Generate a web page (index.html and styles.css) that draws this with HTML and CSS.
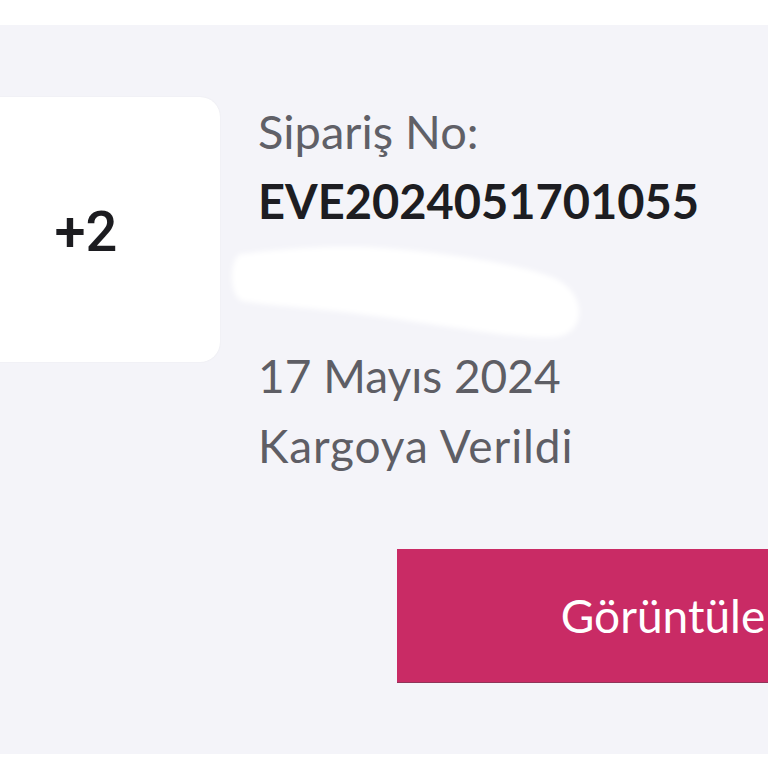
FILE: index.html
```html
<!DOCTYPE html>
<html lang="tr">
<head>
<meta charset="utf-8">
<title>Sipariş</title>
<link rel="stylesheet" href="styles.css">
</head>
<body>
<header class="topbar"></header>
<main class="order">
  <div class="order-row">
    <div class="thumb"><span class="more">+2</span></div>
    <div class="info">
      <div class="label">Sipariş No:</div>
      <div class="number">EVE2024051701055</div>
      <div class="redacted">
        <svg width="370" height="110" viewBox="-6 -4 370 110" aria-hidden="true">
          <defs>
            <filter id="soft" x="-10%" y="-20%" width="120%" height="140%">
              <feGaussianBlur stdDeviation="2.5"/>
            </filter>
          </defs>
          <path filter="url(#soft)" fill="#ffffff" d="M 8 14 C 60 8, 108 5, 150 8 C 220 13, 290 25, 322 38 C 354 52, 356 92, 325 97 C 290 101, 200 83, 120 73 C 70 67, 30 65, 10 61 C -3 56, -3 20, 8 14 Z"/>
        </svg>
      </div>
      <div class="meta">17 Mayıs 2024</div>
      <div class="meta status">Kargoya Verildi</div>
    </div>
  </div>
  <div class="actions">
    <button class="view-btn" type="button">Görüntüle</button>
  </div>
</main>
<footer class="bottombar"></footer>
</body>
</html>
```

FILE: styles.css
```css
* { box-sizing: border-box; }

html, body {
  margin: 0;
  padding: 0;
  background: #ffffff;
  width: 768px;
  height: 768px;
  overflow: hidden;
  font-family: "Lato", "Noto Sans", sans-serif;
}

.topbar {
  height: 25px;
  background: #ffffff;
}

.order {
  height: 729px;
  background: #f4f4f9;
  overflow: hidden;
  padding-top: 72px;
}

.order-row {
  display: flex;
  align-items: flex-start;
  gap: 38px;
}

.thumb {
  width: 260px;
  height: 265px;
  margin-left: -40px;
  flex: none;
  background: #ffffff;
  border-radius: 20px;
  box-shadow: 0 0 2px rgba(0, 0, 0, 0.06);
  display: flex;
  align-items: center;
  justify-content: center;
  padding-right: 8px;
}

.more {
  font-family: "Roboto", "Liberation Sans", sans-serif;
  font-weight: 500;
  font-size: 56px;
  color: #1c1c20;
  line-height: 1;
  margin-top: 4px;
}

.info {
  display: flex;
  flex-direction: column;
  margin-top: -1px;
}

.label,
.number,
.meta {
  font-size: 47px;
  line-height: 70px;
  white-space: nowrap;
}

.label {
  color: #606067;
}

.number {
  color: #1d1d22;
  font-weight: 700;
}

.meta {
  font-size: 46px;
  color: #5e5e65;
}

.status {
  letter-spacing: 0.9px;
}

.redacted {
  height: 105px;
  margin-left: -32px;
}

.redacted svg {
  display: block;
}

.actions {
  padding-left: 397px;
  margin-top: 68px;
}

.view-btn {
  display: block;
  width: 532px;
  height: 134px;
  border: none;
  border-bottom: 1px solid #8f3559;
  border-radius: 0;
  background: #c92b65;
  color: #ffffff;
  font-family: "Lato", "Noto Sans", sans-serif;
  font-size: 46px;
  line-height: 55px;
  padding: 0;
  text-align: center;
}

.bottombar {
  height: 14px;
  background: #ffffff;
}
```
